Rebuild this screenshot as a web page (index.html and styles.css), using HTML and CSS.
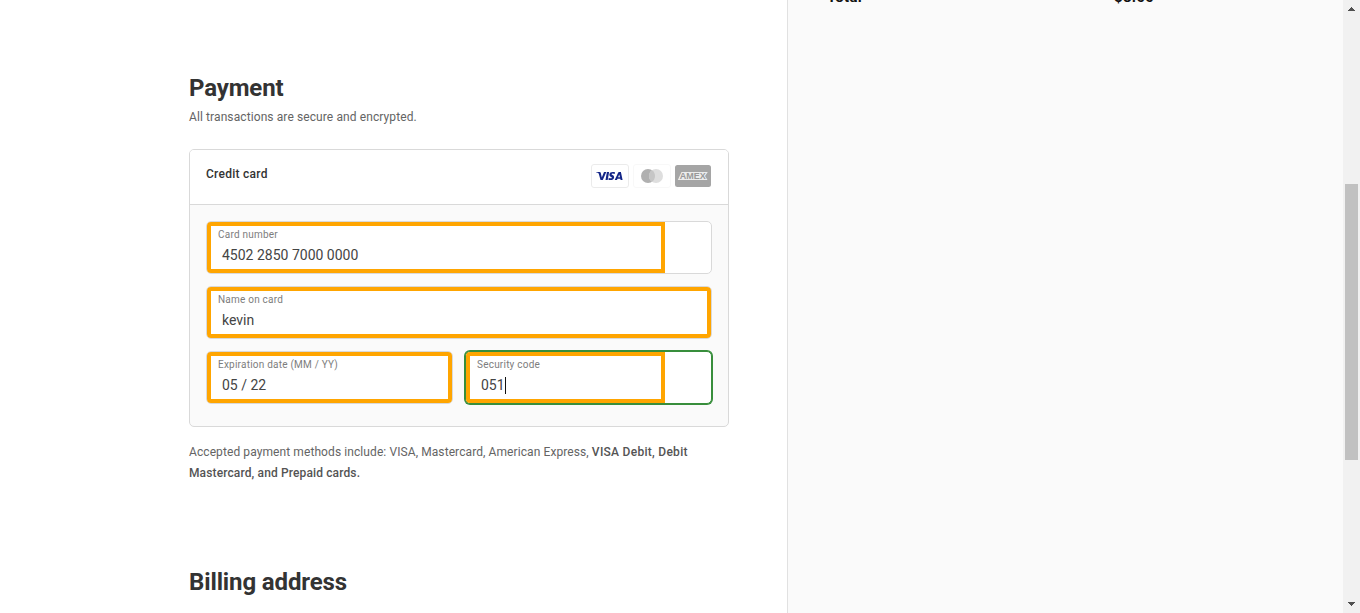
FILE: index.html
```html
<!DOCTYPE html>
<html lang="en">
<head>
<meta charset="utf-8">
<title>Checkout – Payment</title>
<link rel="stylesheet" href="styles.css">
</head>
<body>
<div class="page">
  <main class="main">
    <h2 class="title">Payment</h2>
    <p class="subtitle">All transactions are secure and encrypted.</p>
    <section class="card">
      <header class="card-head">
        <span class="card-name">Credit card</span>
        <svg class="brands" width="120" height="24" viewBox="0 0 120 24">
          <rect x=".5" y=".5" width="37" height="23" rx="2.5" fill="#fff" stroke="#ebebeb"/>
          <g fill="#142688">
            <path d="M5 8h3.700q.9 0 1.100.9l1 4.700L13 8h2.300l-3.500 8H9.500L7.700 9.600Q7 8.600 5 8.300z"/>
            <path d="M15.900 8h2.200l-1.400 8h-2.200z"/>
            <path d="M24 8.200l-.3 1.700q-3-.8-3.100.3c0 .6 2.800.9 2.500 3.200-.3 2.700-3.300 3.100-5.700 2.300l.3-1.800q3 1 3.200-.2c.1-.9-2.700-.9-2.500-3.300.2-2.500 3-2.900 5.600-2.200z"/>
            <path fill-rule="evenodd" d="M28 8h1.900l1.700 8h-2l-.3-1.200h-2.800l-.5 1.200h-2.300l3.400-7.200Q27.400 8 28 8zm.2 2.500-1.100 2.700H29z"/>
          </g>
          <rect x="42.500" y=".5" width="37" height="23" rx="2.500" fill="#fff" stroke="#f8f8f8"/>
          <circle cx="57" cy="12" r="7" fill="#b0b0b0"/>
          <circle cx="65" cy="12" r="7" fill="#dedede"/>
          <path d="M61 6.260a7 7 0 0 1 0 11.480a7 7 0 0 1 0-11.480z" fill="#c6c6c6"/>
          <rect x="84" y="1" width="36" height="22" rx="2.500" fill="#a5a5a5"/>
          <path d="M86.800 16l3.700-8h26.300l-2.800 4 2.500 4z" fill="#ececec"/>
          <text class="amex" x="88.800" y="15" textLength="26" lengthAdjust="spacingAndGlyphs">AMEX</text>
        </svg>
      </header>
      <div class="fields">
        <div class="field wide">
          <div class="input with-icon"><label class="label">Card number</label><span class="value">4502 2850 7000 0000</span></div>
        </div>
        <div class="field wide">
          <div class="input"><label class="label">Name on card</label><span class="value">kevin</span></div>
        </div>
        <div class="field">
          <div class="input"><label class="label">Expiration date (MM / YY)</label><span class="value">05 / 22</span></div>
        </div>
        <div class="field focused">
          <div class="input with-icon"><label class="label">Security code</label><span class="value">051<i class="caret"></i></span></div>
        </div>
      </div>
    </section>
    <p class="note">Accepted payment methods include: VISA, Mastercard, American Express, <b class="strong">VISA Debit, Debit</b><br><b class="strong second">Mastercard, and Prepaid cards.</b></p>
    <h2 class="title billing">Billing address</h2>
  </main>
  <aside class="summary"><span class="total">Total</span><span class="amount">$8.00</span></aside>
  <div class="scrollbar">
    <svg class="arrow" width="7" height="4" viewBox="0 0 7 4" shape-rendering="crispEdges"><path d="M3 0h1v1h1v1h1v1h1v1H0V3h1V2h1V1h1z"/></svg>
    <div class="thumb"></div>
    <svg class="arrow down" width="7" height="4" viewBox="0 0 7 4" shape-rendering="crispEdges"><path d="M0 0h7v1H6v1H5v1H4v1H3V3H2V2H1V1H0z"/></svg>
  </div>
</div>
</body>
</html>
```
FILE: styles.css
```css
* { box-sizing: border-box; }
body { margin: 0; background: #fff; font-family: Roboto, "Liberation Sans", sans-serif; }
.page { display: flex; height: 613px; overflow: hidden; }

.main { width: 787px; padding: 72px 58px 0 189px; }
.title { margin: 0; font-size: 24px; line-height: 32px; font-weight: 700; color: #333; letter-spacing: -.13px; white-space: nowrap; }
.subtitle { margin: 3px 0 0; font-size: 12px; line-height: 20px; letter-spacing: .1px; color: #646464; }

.card { height: 278px; margin-top: 22px; border: 1px solid #d9d9d9; border-radius: 5px; background: #fafafa; overflow: hidden; }
.card-head { display: flex; justify-content: space-between; height: 55px; padding: 14px 17px 0 16px; border-bottom: 1px solid #d9d9d9; background: #fff; }
.card-name { font-size: 12px; line-height: 20px; font-weight: 500; letter-spacing: .27px; color: #333; }
.brands { display: block; }
.amex { font: 700 8.500px "Liberation Sans", sans-serif; fill: #999; }

.fields { display: grid; grid-template-columns: 247px 247px; gap: 12px; padding: 16px; }
.field { height: 53px; border: 1px solid #d9d9d9; border-radius: 5px; background: #fff; }
.wide { grid-column: 1 / 3; }
.focused { border-color: #388e3c; box-shadow: 0 0 0 1px #388e3c; }
.input { display: flex; flex-direction: column; height: 51px; padding: 3px 7px 0; border: 4px solid #ffa500; border-radius: 4px; }
.with-icon { margin-right: 46px; border-radius: 4px 0 0 4px; }
.label { font-size: 10px; line-height: 12px; letter-spacing: .22px; color: #7d7d7d; white-space: nowrap; }
.value { display: flex; align-items: center; margin-top: 5px; padding-left: 4px; font-size: 14px; line-height: 18px; color: #444; }
.caret { width: 1px; height: 17px; background: #111; }

.note { margin: 15px 0 0; font-size: 12px; line-height: 21px; letter-spacing: .09px; color: #646464; white-space: nowrap; }
.strong { font-weight: 500; letter-spacing: .28px; color: #545454; }
.second { letter-spacing: .13px; }
.billing { margin-top: 82px; }

.summary { display: flex; align-items: flex-start; width: 556px; padding-left: 39px; border-left: 1px solid #e1e1e1; background: #fafafa; font-size: 15px; line-height: 16px; font-weight: 700; letter-spacing: .3px; color: #111; }
.total { width: 287px; margin-top: -11px; }
.amount { margin-top: -11px; }

.scrollbar { display: flex; flex-direction: column; align-items: center; width: 17px; padding-top: 7px; background: #f1f1f1; }
.arrow { display: block; fill: #505050; }
.thumb { width: 13px; height: 276px; margin-top: 173px; background: #c1c1c1; }
.down { margin-top: 142px; }
```
